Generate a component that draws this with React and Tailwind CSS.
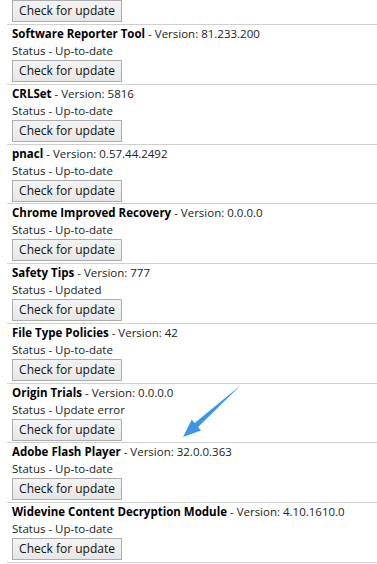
const items = [
  { name: 'Software Reporter Tool', version: '81.233.200', status: 'Up-to-date' },
  { name: 'CRLSet', version: '5816', status: 'Up-to-date' },
  { name: 'pnacl', version: '0.57.44.2492', status: 'Up-to-date' },
  { name: 'Chrome Improved Recovery', version: '0.0.0.0', status: 'Up-to-date' },
  { name: 'Safety Tips', version: '777', status: 'Updated' },
  { name: 'File Type Policies', version: '42', status: 'Up-to-date' },
  { name: 'Origin Trials', version: '0.0.0.0', status: 'Update error' },
  { name: 'Adobe Flash Player', version: '32.0.0.363', status: 'Up-to-date' },
  { name: 'Widevine Content Decryption Module', version: '4.10.1610.0', status: 'Up-to-date' },
]

function CheckButton() {
  return (
    <button className="h-[22px] w-[110px] border border-[#adadad] bg-gradient-to-b from-[#f4f4f4] to-[#e6e6e6] text-[12px] leading-[20px] text-[#111]">
      Check for update
    </button>
  )
}

export default function App() {
  return (
    <div
      className="relative h-[564px] w-[377px] overflow-hidden bg-white text-[11.5px] text-[#222]"
      style={{ fontFamily: '"Open Sans", "Noto Sans", sans-serif' }}
    >
      <div className="ml-[7px]">
        <div className="h-[24px] pl-[5px]">
          <CheckButton />
        </div>
        {items.map((it) => (
          <div key={it.name} className="h-[59.78px] border-t border-[#cfcfcf] pl-[5px]">
            <div className="h-[17px] leading-[17px] whitespace-nowrap">
              <span className="font-bold text-black">{it.name}</span> - Version: {it.version}
            </div>
            <div className="mb-[1px] h-[17px] leading-[17px]">Status - {it.status}</div>
            <CheckButton />
          </div>
        ))}
        <div className="border-t border-[#cfcfcf]" />
      </div>
      <svg className="absolute left-0 top-0" width="377" height="564" viewBox="0 0 377 564">
        <polygon
          points="241,385 198.1,426.9 201,430.5 183,437 191.7,419.8 194.7,423.1"
          fill="#3b97e6"
        />
      </svg>
    </div>
  )
}
